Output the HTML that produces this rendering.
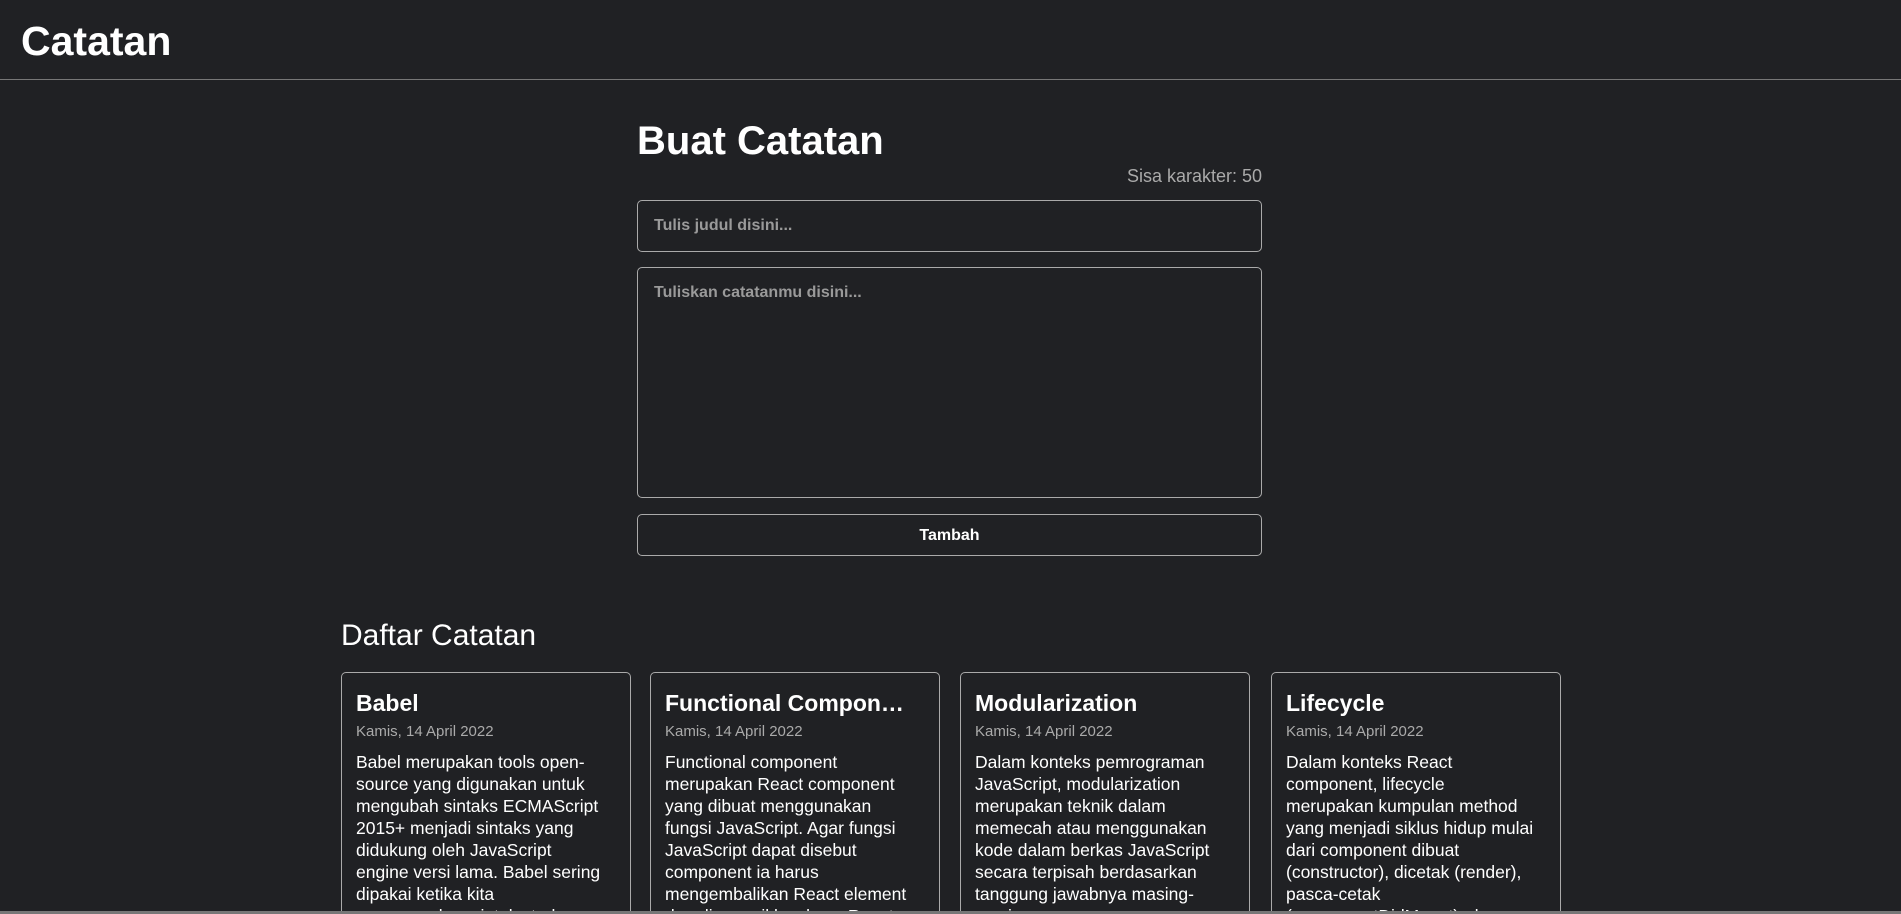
<!DOCTYPE html>
<html><head><meta charset="utf-8"><style>
*{box-sizing:border-box;margin:0;padding:0}
html,body{width:1901px;height:914px;overflow:hidden;background:#202124;color:#fff;font-family:"Liberation Sans",sans-serif}
.hdr{height:80px;border-bottom:1px solid #777;position:relative}
.hdr h1{position:absolute;left:21px;top:18px;font-size:41px;font-weight:bold}
.form{position:absolute;left:637px;top:119px;width:625px}
.form h2{font-size:40px;font-weight:bold;height:46px}
.sisa{text-align:right;color:#aaa;font-size:18px;margin-top:1px;height:20px}
.box{border:1px solid #aaa;border-radius:5px;color:#9a9a9a;font-weight:bold;font-size:16px;padding:16px 16px}
.in{position:absolute;top:81px;left:0;width:625px;height:52px}
.ta{position:absolute;top:148px;left:0;width:625px;height:231px}
.btn{position:absolute;top:395px;left:0;width:625px;height:42px;color:#fff;text-align:center;padding:12px 0}
.dl{position:absolute;left:341px;top:619px;font-size:30px}
.card{position:absolute;top:672px;width:290px;height:242px;border:1px solid #aaa;border-bottom:none;border-radius:5px 5px 0 0;padding:17px 24px 0 14px;overflow:hidden}
.card h3{font-size:23px;font-weight:bold;white-space:nowrap;overflow:hidden;text-overflow:ellipsis;height:30px}
.card .d{color:#aaa;font-size:15px;margin-top:3px;height:24px}
.card p{font-size:17.5px;line-height:22px;margin-top:4px}
.bar{position:absolute;left:0;top:911px;width:1901px;height:3px;background:#777}
</style></head><body>
<div class="hdr"><h1>Catatan</h1></div>
<div class="form">
<h2>Buat Catatan</h2>
<div class="sisa">Sisa karakter: 50</div>
<div class="box in">Tulis judul disini...</div>
<div class="box ta">Tuliskan catatanmu disini...</div>
<div class="box btn">Tambah</div>
</div>
<div class="dl">Daftar Catatan</div>
<div class="card" style="left:341px"><h3>Babel</h3><div class="d">Kamis, 14 April 2022</div><p>Babel merupakan tools open-source yang digunakan untuk mengubah sintaks ECMAScript 2015+ menjadi sintaks yang didukung oleh JavaScript engine versi lama. Babel sering dipakai ketika kita menggunakan sintaks terbaru</p></div>
<div class="card" style="left:650px"><h3>Functional Compone…</h3><div class="d">Kamis, 14 April 2022</div><p>Functional component merupakan React component yang dibuat menggunakan fungsi JavaScript. Agar fungsi JavaScript dapat disebut component ia harus mengembalikan React element dan dipanggil layaknya React</p></div>
<div class="card" style="left:960px"><h3>Modularization</h3><div class="d">Kamis, 14 April 2022</div><p>Dalam konteks pemrograman JavaScript, modularization merupakan teknik dalam memecah atau menggunakan kode dalam berkas JavaScript secara terpisah berdasarkan tanggung jawabnya masing-masing.</p></div>
<div class="card" style="left:1271px"><h3>Lifecycle</h3><div class="d">Kamis, 14 April 2022</div><p>Dalam konteks React component, lifecycle merupakan kumpulan method yang menjadi siklus hidup mulai dari component dibuat (constructor), dicetak (render), pasca-cetak (componentDidMount), dan</p></div>
<div class="bar"></div>
</body></html>
